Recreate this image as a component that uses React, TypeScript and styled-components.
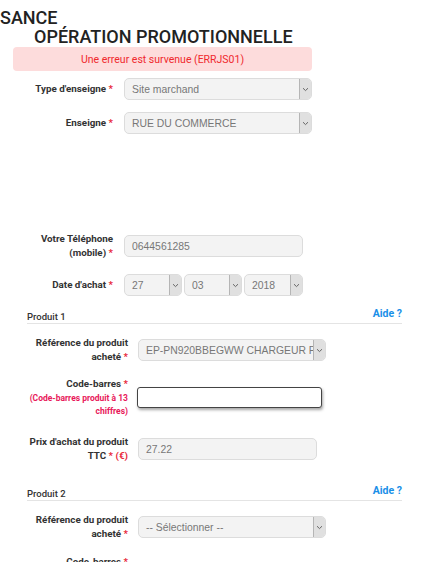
import React from 'react'
import styled, { createGlobalStyle } from 'styled-components'

const GlobalStyle = createGlobalStyle`
  html, body {
    margin: 0;
    padding: 0;
    background: #fff;
  }
  body {
    font-family: Roboto, "Liberation Sans", Arial, sans-serif;
    overflow: hidden;
  }
`

const Page = styled.div`
  width: 428px;
  height: 562px;
  overflow: hidden;
`

const Title = styled.h1`
  margin: 0;
  padding-top: 8px;
  font-size: 18px;
  font-weight: 500;
  line-height: 19px;
  color: #222;
`

const TitleLine = styled.div<{ $indent?: number }>`
  padding-left: ${p => p.$indent || 0}px;
`

const ErrorBox = styled.div`
  margin: 1px 0 0 13px;
  width: 299px;
  height: 24px;
  border-radius: 4px;
  background: #fddcdc;
  color: #f0282d;
  font-size: 10.5px;
  display: flex;
  align-items: center;
  justify-content: center;
`

const TopForm = styled.div`
  padding-left: 13px;
  display: flex;
  flex-direction: column;
`

const Row = styled.div<{ $label: number; $gap: number; $mt: number }>`
  display: grid;
  grid-template-columns: ${p => p.$label}px auto;
  column-gap: ${p => p.$gap}px;
  align-items: center;
  margin-top: ${p => p.$mt}px;
`

const Label = styled.div`
  text-align: right;
  font-size: 9.8px;
  font-weight: 700;
  line-height: 14px;
  color: #333;
  white-space: nowrap;
`

const Star = styled.span`
  color: #e8283a;
`

const Hint = styled.div`
  color: #e8185a;
  font-size: 8.5px;
  line-height: 13px;
  margin-top: 1px;
`

const FieldBox = styled.div<{ $w: number }>`
  width: ${p => p.$w}px;
  height: 22px;
  box-sizing: border-box;
  border: 1px solid #dcdcdc;
  border-radius: 5px;
  background: #f3f3f3;
  display: flex;
  align-items: stretch;
  overflow: hidden;
  font-family: "Liberation Sans", Arial, sans-serif;
  font-size: 10.4px;
  color: #777;
`

const FieldText = styled.div`
  flex: 1;
  padding-left: 7px;
  display: flex;
  align-items: center;
  white-space: nowrap;
  overflow: hidden;
`

const Arrow = styled.div`
  width: 11px;
  flex: none;
  background: #e0e0e0;
  border-left: 1px solid #b5b5b5;
  display: flex;
  align-items: center;
  justify-content: center;
`

const FocusInput = styled.div`
  width: 185px;
  height: 21px;
  box-sizing: border-box;
  border: 1px solid #444;
  border-radius: 3px;
  background: #fff;
  box-shadow: 1px 2px 3px rgba(0, 0, 0, 0.35);
`

const DateGroup = styled.div`
  display: flex;
  gap: 2px;
`

const Spacer = styled.div<{ $h: number }>`
  height: ${p => p.$h}px;
`

const Section = styled.div<{ $mt: number }>`
  margin: ${p => p.$mt}px 0 0 27px;
  width: 375px;
`

const SectionHead = styled.div`
  display: flex;
  justify-content: space-between;
  align-items: flex-end;
  border-bottom: 1px solid #e4e4e4;
  padding-bottom: 1px;
`

const SectionTitle = styled.div`
  font-size: 9.5px;
  font-weight: 500;
  color: #333;
`

const Help = styled.div`
  font-size: 10.5px;
  font-weight: 700;
  color: #1a8fe8;
  padding-bottom: 2px;
`

const Chevron = () => (
  <svg width="7" height="5" viewBox="0 0 7 5">
    <path d="M1 1.2 L3.5 3.6 L6 1.2" fill="none" stroke="#666" strokeWidth="1" />
  </svg>
)

const Select = ({ w, value }: { w: number; value: string }) => (
  <FieldBox $w={w}>
    <FieldText>{value}</FieldText>
    <Arrow>
      <Chevron />
    </Arrow>
  </FieldBox>
)

const Input = ({ w, value }: { w: number; value: string }) => (
  <FieldBox $w={w}>
    <FieldText>{value}</FieldText>
  </FieldBox>
)

const App = () => {
  return (
    <Page>
      <GlobalStyle />
      <Title>
        <TitleLine>SANCE</TitleLine>
        <TitleLine $indent={34}>OPÉRATION PROMOTIONNELLE</TitleLine>
      </Title>
      <ErrorBox>Une erreur est survenue (ERRJS01)</ErrorBox>

      <TopForm>
        <Row $label={100} $gap={11} $mt={7}>
          <Label>
            Type d'enseigne <Star>*</Star>
          </Label>
          <Select w={188} value="Site marchand" />
        </Row>
        <Row $label={100} $gap={11} $mt={12}>
          <Label>
            Enseigne <Star>*</Star>
          </Label>
          <Select w={188} value="RUE DU COMMERCE" />
        </Row>
        <Spacer $h={98} />
        <Row $label={100} $gap={11} $mt={0}>
          <Label>
            Votre Téléphone
            <br />
            (mobile) <Star>*</Star>
          </Label>
          <Input w={179} value="0644561285" />
        </Row>
        <Row $label={100} $gap={11} $mt={14}>
          <Label>
            Date d'achat <Star>*</Star>
          </Label>
          <DateGroup>
            <Select w={58} value="27" />
            <Select w={58} value="03" />
            <Select w={59} value="2018" />
          </DateGroup>
        </Row>
      </TopForm>

      <Section $mt={11}>
        <SectionHead>
          <SectionTitle>Produit 1</SectionTitle>
          <Help>Aide ?</Help>
        </SectionHead>
        <Row $label={101} $gap={10} $mt={12}>
          <Label>
            Référence du produit
            <br />
            acheté <Star>*</Star>
          </Label>
          <Select w={188} value="EP-PN920BBEGWW CHARGEUR PORTABLE" />
        </Row>
        <Row $label={101} $gap={9} $mt={13}>
          <Label>
            Code-barres <Star>*</Star>
            <Hint>
              (Code-barres produit à 13
              <br />
              chiffres)
            </Hint>
          </Label>
          <FocusInput />
        </Row>
        <Row $label={101} $gap={10} $mt={17}>
          <Label>
            Prix d'achat du produit
            <br />
            TTC <Star>*</Star> <Star>(€)</Star>
          </Label>
          <Input w={179} value="27.22" />
        </Row>
      </Section>

      <Section $mt={21}>
        <SectionHead>
          <SectionTitle>Produit 2</SectionTitle>
          <Help>Aide ?</Help>
        </SectionHead>
        <Row $label={101} $gap={10} $mt={12}>
          <Label>
            Référence du produit
            <br />
            acheté <Star>*</Star>
          </Label>
          <Select w={188} value="-- Sélectionner --" />
        </Row>
        <Row $label={101} $gap={10} $mt={14}>
          <Label>
            Code-barres <Star>*</Star>
          </Label>
          <div />
        </Row>
      </Section>
    </Page>
  )
}

export default App
